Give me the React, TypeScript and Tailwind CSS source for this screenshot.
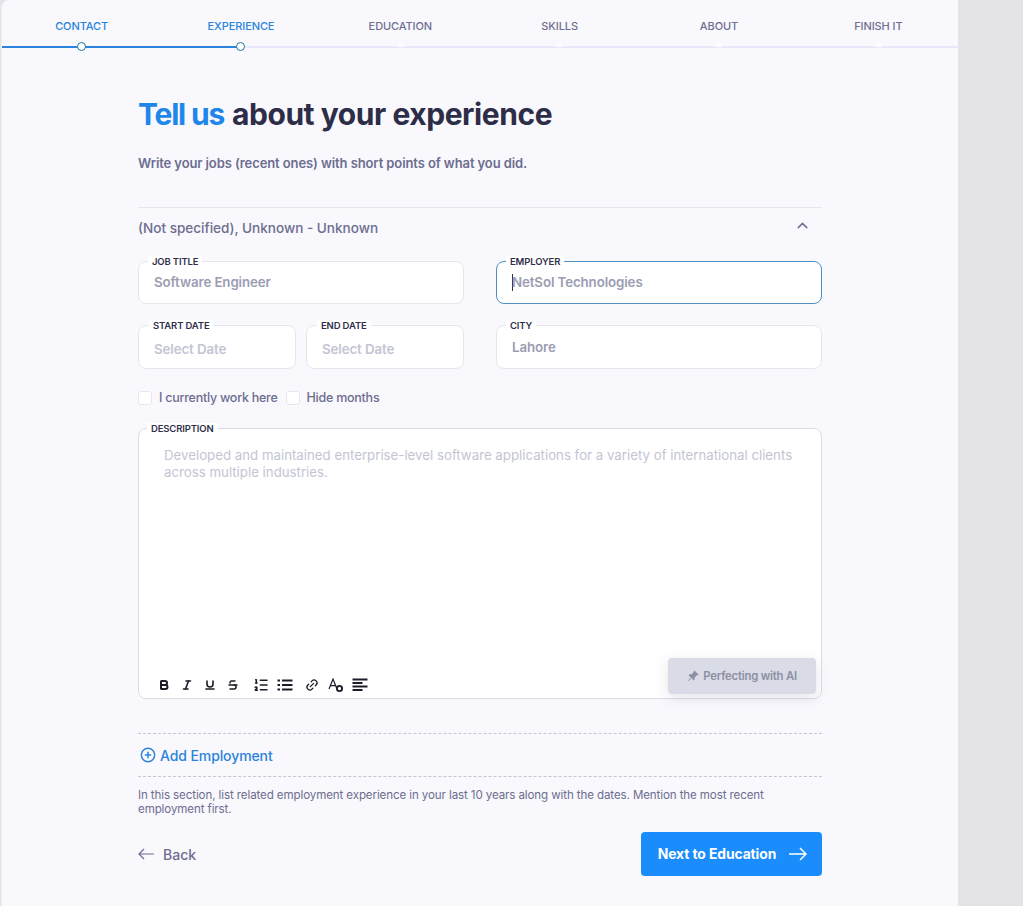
import { Bold, ChevronUp, Italic, Link2, ListOrdered, PlusCircle, Strikethrough, Underline } from "lucide-react";
import { BsPinAngleFill } from "react-icons/bs";
import type { ReactNode } from "react";

const steps = ["CONTACT", "EXPERIENCE", "EDUCATION", "SKILLS", "ABOUT", "FINISH IT"];

function Field({
  label,
  value,
  className = "",
  labelClass = "left-[9px]",
  textClass = "text-[#9a9db2]",
  focused = false,
}: {
  label: string;
  value: string;
  className?: string;
  labelClass?: string;
  textClass?: string;
  focused?: boolean;
}) {
  return (
    <div
      className={`relative flex items-center rounded-lg border bg-white pl-[15px] ${
        focused ? "border-[#4f8fc0]" : "border-[#e6e6ef]"
      } ${className}`}
    >
      <span className={`absolute top-[-6px] bg-white px-[4px] text-[9.5px] leading-[11px] font-semibold tracking-[-0.15px] text-[#2f2f4a] ${labelClass}`}>
        {label}
      </span>
      {focused && <span className="mr-[-1px] h-[17px] w-px bg-[#2f2f4a]" />}
      <span className={`text-[13.3px] font-semibold tracking-[-0.1px] ${textClass}`}>{value}</span>
    </div>
  );
}

function Tool({ children, className = "" }: { children: ReactNode; className?: string }) {
  return <span className={`flex h-[16px] w-[16px] items-center justify-center text-[#1c1c28] ${className}`}>{children}</span>;
}

export default function App() {
  return (
    <div className="flex h-[906px] w-[1023px] overflow-hidden bg-[#e3e3e8] font-['Inter',sans-serif]">
      <main className="ml-px h-full w-[957px] rounded-tl-lg border-l border-[#ececf3] bg-[#f8f8fd]">
        <nav className="relative h-[48px]">
          <div className="absolute top-[46px] left-0 h-[2px] w-full bg-[#e8e8fa]" />
          <div className="absolute top-[46px] left-0 h-[2px] w-[239px] bg-[#2a83dc]" />
          <div className="relative grid grid-cols-6">
            {steps.map((step, i) => (
              <div key={step} className="flex h-[48px] flex-col items-center">
                <span
                  className={`mt-[20px] text-[11px] leading-[13px] font-medium tracking-[-0.1px] ${
                    i < 2 ? "text-[#2a83dc]" : "text-[#6f6f91]"
                  }`}
                >
                  {step}
                </span>
                {i < 2 ? (
                  <span className="mt-[9px] h-[9px] w-[9px] shrink-0 rounded-full border-[1.5px] border-[#1f7a96] bg-white" />
                ) : (
                  <span className="mt-[10px] h-[4px] w-[7px] shrink-0 rounded-t-full bg-[#fcfcff]" />
                )}
              </div>
            ))}
          </div>
        </nav>

        <div className="mx-auto w-[684px] pt-[48px]">
          <h1 className="text-[30px] leading-[36px] font-bold tracking-[-0.45px] text-[#2d2d48]">
            <span className="tracking-[-1.2px] text-[#1f86ea]">Tell us</span>
            <span className="ml-[8px]">about your experience</span>
          </h1>
          <p className="mt-[22px] text-[13px] leading-[18px] font-semibold tracking-[-0.1px] text-[#6d6d8f]">
            Write your jobs (recent ones) with short points of what you did.
          </p>

          <div className="mt-[35px] flex h-[42px] items-start justify-between border-t border-[#e6e6ee] pt-[11px]">
            <span className="text-[13.55px] leading-[18px] font-medium text-[#6d6d8f]">(Not specified), Unknown - Unknown</span>
            <ChevronUp size={17} strokeWidth={2} className="mt-[-2px] mr-[11px] text-[#6d6d8f]" />
          </div>

          <div className="mt-[12px] flex justify-between">
            <Field label="JOB TITLE" value="Software Engineer" className="h-[43px] w-[326px]" />
            <Field label="EMPLOYER" value="NetSol Technologies" className="h-[43px] w-[326px]" focused />
          </div>

          <div className="mt-[21px] flex justify-between">
            <div className="flex w-[326px] justify-between">
              <Field
                label="START DATE"
                value="Select Date"
                labelClass="left-[10px]"
                textClass="pt-[5px] text-[#c3c5d3]"
                className="h-[44px] w-[158px]"
              />
              <Field
                label="END DATE"
                value="Select Date"
                labelClass="left-[10px]"
                textClass="pt-[5px] text-[#c3c5d3]"
                className="h-[44px] w-[158px]"
              />
            </div>
            <Field label="CITY" value="Lahore" textClass="pt-[1px] text-[#9a9db2]" className="h-[44px] w-[326px]" />
          </div>

          <div className="mt-[22px] flex h-[14px] items-center text-[12.5px] font-medium tracking-[-0.25px] text-[#6d6d8f]">
            <span className="h-[14px] w-[14px] rounded-[3px] border border-[#e6e6ef] bg-white" />
            <span className="ml-[7px]">I currently work here</span>
            <span className="ml-[8px] h-[14px] w-[14px] rounded-[3px] border border-[#e6e6ef] bg-white" />
            <span className="ml-[7px]">Hide months</span>
          </div>

          <div className="relative mt-[23px] h-[271px] rounded-lg border border-[#dcdce6] bg-white">
            <span className="absolute top-[-6px] left-[8px] bg-white px-[4px] text-[9.5px] leading-[11px] font-semibold tracking-[-0.15px] text-[#2f2f4a]">
              DESCRIPTION
            </span>
            <p className="px-[25px] pt-[18px] text-[13.25px] leading-[17px] font-normal text-[#c3c5d3]">
              Developed and maintained enterprise-level software applications for a variety of international clients across multiple
              industries.
            </p>
            <div className="absolute bottom-[5px] left-[17px] flex items-center">
              <Tool><Bold size={12} strokeWidth={4} /></Tool>
              <Tool className="ml-[7px]"><Italic size={12} strokeWidth={3.2} /></Tool>
              <Tool className="ml-[7px]"><Underline size={12} strokeWidth={3.2} /></Tool>
              <Tool className="ml-[7px]"><Strikethrough size={12} strokeWidth={3} /></Tool>
              <Tool className="ml-[12px]"><ListOrdered size={16} strokeWidth={2.3} /></Tool>
              <Tool className="ml-[8px]">
                <svg width="16" height="14" viewBox="0 0 16 14" fill="none" stroke="currentColor" strokeWidth="1.9">
                  <path d="M5 2.5h10.5M5 7h10.5M5 11.5h10.5M.5 2.5h2.5M.5 7h2.5M.5 11.5h2.5" />
                </svg>
              </Tool>
              <Tool className="ml-[11px]"><Link2 size={14} strokeWidth={2.2} className="-rotate-45" /></Tool>
              <Tool className="ml-[8px]">
                <svg width="16" height="16" viewBox="0 0 16 16" fill="none" stroke="currentColor" strokeWidth="1.2">
                  <path d="M1 12 5 2l4 10M2.4 8.6h5.2" />
                  <circle cx="11.5" cy="11.5" r="2.6" strokeWidth="1.9" />
                </svg>
              </Tool>
              <Tool className="ml-[8px]">
                <svg width="16" height="14" viewBox="0 0 16 14" fill="none" stroke="currentColor" strokeWidth="1.8">
                  <path d="M.5 1.5h15M.5 5h10M.5 8.5h15M.5 12h10" />
                </svg>
              </Tool>
            </div>
            <button className="absolute right-[5px] bottom-[4px] flex h-[36px] w-[148px] items-center justify-center gap-[4px] rounded bg-[#d9dbe6] text-[11.3px] font-semibold tracking-[-0.2px] text-[#8e90a5] shadow-[0_4px_14px_rgba(120,120,150,0.2)]">
              <BsPinAngleFill size={12} />
              Perfecting with AI
            </button>
          </div>

          <div className="mt-[34px] flex h-[44px] items-center border-y border-dashed border-[#c6c6d2]">
            <PlusCircle size={16} strokeWidth={2.2} className="ml-[2px] text-[#2a83dc]" />
            <span className="ml-[4px] text-[14px] font-medium tracking-[-0.1px] text-[#2a83dc]">Add Employment</span>
          </div>

          <p className="mt-[11px] w-[640px] text-[11.55px] leading-[14px] font-normal tracking-[-0.1px] text-[#6d6d8f]">
            In this section, list related employment experience in your last 10 years along with the dates. Mention the most recent
            employment first.
          </p>

          <div className="mt-[16px] flex items-center justify-between">
            <button className="flex items-center gap-[9px] text-[14px] font-medium text-[#6d6d8f]">
              <svg width="16" height="12" viewBox="0 0 16 12" fill="none" stroke="currentColor" strokeWidth="1.2">
                <path d="M16 6H1M6 1 1 6l5 5" />
              </svg>
              Back
            </button>
            <button className="flex h-[44px] w-[181px] items-center justify-center gap-[13px] rounded bg-[#1a8cfc] pl-[2px] text-[13.9px] font-bold tracking-[-0.1px] text-white">
              Next to Education
              <svg width="18" height="14" viewBox="0 0 18 14" fill="none" stroke="currentColor" strokeWidth="1.5">
                <path d="M0 7h17M11 1l6 6-6 6" />
              </svg>
            </button>
          </div>
        </div>
      </main>
    </div>
  );
}
